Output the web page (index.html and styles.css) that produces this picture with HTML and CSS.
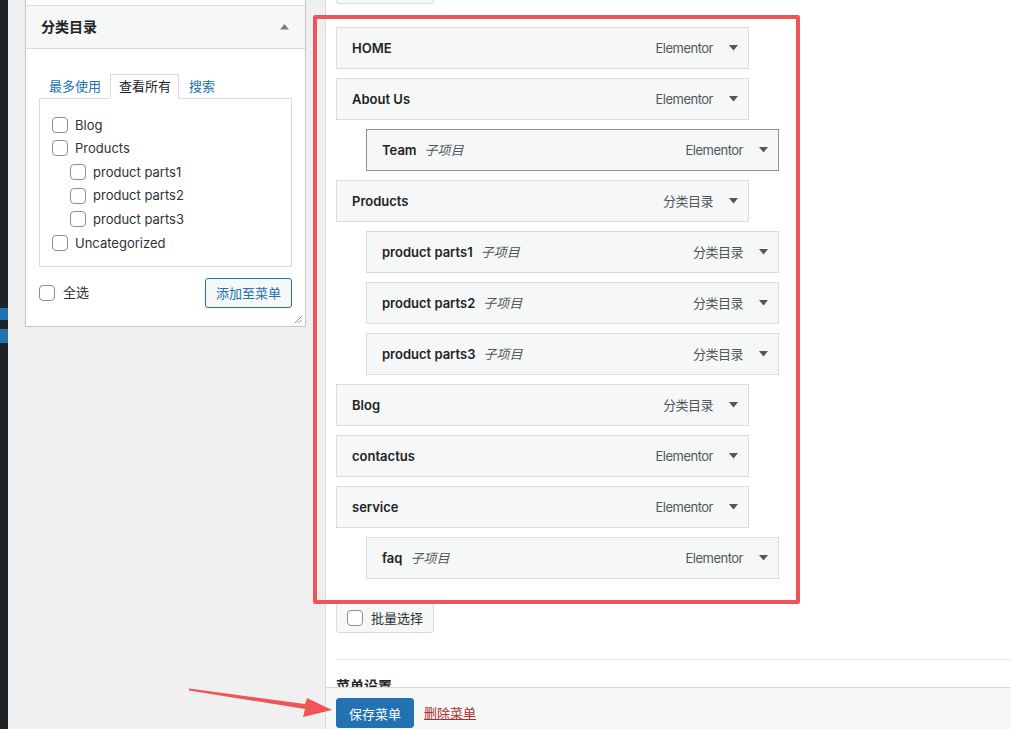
FILE: index.html
```html
<!DOCTYPE html>
<html lang="zh-CN">
<head>
    <meta charset="UTF-8">
    <meta name="viewport" content="width=device-width, initial-scale=1.0">
    <title>菜单</title>
    <link rel="stylesheet" href="styles.css">
</head>
<body>

    <!-- edge of the admin sidebar -->
    <div id="adminmenu-edge">
        <div class="current-top"></div>
        <div class="current-notch"></div>
        <div class="current-bottom"></div>
    </div>

    <div id="wpbody">

        <!-- Left column: add items -->
        <div id="menu-settings-column">
            <div class="accordion">
                <div class="accordion-section prev-section"></div>
                <div class="accordion-section open">
                    <h3 class="accordion-title">
                        分类目录
                        <svg class="toggle-arrow" width="9" height="6" viewBox="0 0 9 6"><polygon points="4.5,0 9,5.5 0,5.5" fill="#787c82"/></svg>
                    </h3>
                    <div class="accordion-content">
                        <ul class="tabs">
                            <li><a href="#">最多使用</a></li>
                            <li class="active">查看所有</li>
                            <li><a href="#">搜索</a></li>
                        </ul>
                        <div class="tabs-panel">
                            <ul class="checklist">
                                <li><label><input type="checkbox"> Blog</label></li>
                                <li><label><input type="checkbox"> Products</label></li>
                                <li class="child"><label><input type="checkbox"> product parts1</label></li>
                                <li class="child"><label><input type="checkbox"> product parts2</label></li>
                                <li class="child"><label><input type="checkbox"> product parts3</label></li>
                                <li><label><input type="checkbox"> Uncategorized</label></li>
                            </ul>
                        </div>
                        <div class="button-controls">
                            <label class="select-all"><input type="checkbox"> 全选</label>
                            <button class="button">添加至菜单</button>
                        </div>
                        <svg class="resize-grip" width="8" height="8" viewBox="0 0 8 8">
                            <line x1="1" y1="8" x2="8" y2="1" stroke="#8c8f94" stroke-width="1"/>
                            <line x1="4.5" y1="8" x2="8" y2="4.5" stroke="#8c8f94" stroke-width="1"/>
                        </svg>
                    </div>
                </div>
            </div>
        </div>

        <!-- Right column: menu structure -->
        <div id="menu-management">
            <div class="menu-edit">
                <div class="menu-inner">
                    <!-- top bulk-select button, scrolled mostly out of view -->
                    <div class="bulk-select top"></div>

                    <ul id="menu-to-edit">
                        <li class="menu-item"><div class="item-bar"><span class="item-title">HOME</span><span class="item-type">Elementor</span><svg class="item-arrow" width="9" height="6" viewBox="0 0 9 6"><polygon points="0,0 9,0 4.5,5.5"/></svg></div></li>
                        <li class="menu-item"><div class="item-bar"><span class="item-title">About Us</span><span class="item-type">Elementor</span><svg class="item-arrow" width="9" height="6" viewBox="0 0 9 6"><polygon points="0,0 9,0 4.5,5.5"/></svg></div></li>
                        <li class="menu-item depth-1"><div class="item-bar focused"><span class="item-title">Team</span><span class="item-sub">子项目</span><span class="item-type">Elementor</span><svg class="item-arrow" width="9" height="6" viewBox="0 0 9 6"><polygon points="0,0 9,0 4.5,5.5"/></svg></div></li>
                        <li class="menu-item"><div class="item-bar"><span class="item-title">Products</span><span class="item-type">分类目录</span><svg class="item-arrow" width="9" height="6" viewBox="0 0 9 6"><polygon points="0,0 9,0 4.5,5.5"/></svg></div></li>
                        <li class="menu-item depth-1"><div class="item-bar"><span class="item-title">product parts1</span><span class="item-sub">子项目</span><span class="item-type">分类目录</span><svg class="item-arrow" width="9" height="6" viewBox="0 0 9 6"><polygon points="0,0 9,0 4.5,5.5"/></svg></div></li>
                        <li class="menu-item depth-1"><div class="item-bar"><span class="item-title">product parts2</span><span class="item-sub">子项目</span><span class="item-type">分类目录</span><svg class="item-arrow" width="9" height="6" viewBox="0 0 9 6"><polygon points="0,0 9,0 4.5,5.5"/></svg></div></li>
                        <li class="menu-item depth-1"><div class="item-bar"><span class="item-title">product parts3</span><span class="item-sub">子项目</span><span class="item-type">分类目录</span><svg class="item-arrow" width="9" height="6" viewBox="0 0 9 6"><polygon points="0,0 9,0 4.5,5.5"/></svg></div></li>
                        <li class="menu-item"><div class="item-bar"><span class="item-title">Blog</span><span class="item-type">分类目录</span><svg class="item-arrow" width="9" height="6" viewBox="0 0 9 6"><polygon points="0,0 9,0 4.5,5.5"/></svg></div></li>
                        <li class="menu-item"><div class="item-bar"><span class="item-title">contactus</span><span class="item-type">Elementor</span><svg class="item-arrow" width="9" height="6" viewBox="0 0 9 6"><polygon points="0,0 9,0 4.5,5.5"/></svg></div></li>
                        <li class="menu-item"><div class="item-bar"><span class="item-title">service</span><span class="item-type">Elementor</span><svg class="item-arrow" width="9" height="6" viewBox="0 0 9 6"><polygon points="0,0 9,0 4.5,5.5"/></svg></div></li>
                        <li class="menu-item depth-1"><div class="item-bar"><span class="item-title">faq</span><span class="item-sub">子项目</span><span class="item-type">Elementor</span><svg class="item-arrow" width="9" height="6" viewBox="0 0 9 6"><polygon points="0,0 9,0 4.5,5.5"/></svg></div></li>
                    </ul>

                    <label class="bulk-select"><input type="checkbox"> 批量选择</label>

                    <hr class="divider">
                    <h3 class="settings-title">菜单设置</h3>
                </div>
            </div>

            <div class="menu-footer">
                <button class="button-primary">保存菜单</button>
                <a class="delete-link" href="#">删除菜单</a>
            </div>
        </div>
    </div>

    <!-- annotation drawn over the screenshot -->
    <div class="callout-box"></div>
    <svg class="callout-arrow" width="155" height="40" viewBox="0 0 155 40">
        <polygon points="4,3.5 120,19 122,13 147,25 118,32 120,24 4,5.5" fill="#f05555"/>
    </svg>

</body>
</html>
```

FILE: styles.css
```css
/* Basic styles */
* {
    box-sizing: border-box;
}

html, body {
    height: 100%;
}

body {
    margin: 0;
    display: flex;
    overflow: hidden;
    background: #f0f0f1;
    color: #2c3338;
    font-family: Inter, "Noto Sans CJK SC", sans-serif;
    font-size: 13px;
    line-height: 1.4;
}

ul {
    margin: 0;
    padding: 0;
    list-style: none;
}

input[type="checkbox"] {
    appearance: none;
    -webkit-appearance: none;
    width: 16px;
    height: 16px;
    margin: 0;
    border: 1px solid #8c8f94;
    border-radius: 4px;
    background: #fff;
    flex-shrink: 0;
}

/* Admin sidebar edge */
#adminmenu-edge {
    width: 8px;
    flex-shrink: 0;
    background: #1d2327;
    padding-top: 308px;
}

.current-top { height: 12px; background: #2271b1; }
.current-notch { height: 9px; }
.current-bottom { height: 14px; background: #2271b1; }

#wpbody {
    flex: 1;
    display: flex;
    min-width: 0;
}

/* Left column */
#menu-settings-column {
    width: 281px;
    flex-shrink: 0;
    margin-left: 17px;
    margin-top: -26px;
}

.accordion {
    background: #fff;
    border: 1px solid #c3c4c7;
}

.prev-section {
    height: 30px;
}

.accordion-section.open {
    border-top: 1px solid #dcdcde;
}

.accordion-title {
    margin: 0;
    height: 43px;
    display: flex;
    align-items: center;
    justify-content: space-between;
    padding: 0 16px 0 15px;
    background: #f6f7f7;
    border-bottom: 1px solid #dcdcde;
    font-size: 14px;
    font-weight: 600;
    color: #1d2327;
}

.accordion-content {
    position: relative;
    padding: 25px 13px 18px;
}

.tabs {
    display: flex;
    margin-bottom: -1px;
}

.tabs li {
    height: 25px;
    line-height: 23px;
    padding: 1px 9px 0 10px;
}

.tabs li a {
    color: #2271b1;
    text-decoration: none;
}

.tabs li.active {
    padding: 0 7px 0 8px;
    border: 1px solid #dcdcde;
    border-bottom-color: #fff;
    background: #fff;
    color: #1d2327;
    position: relative;
    z-index: 1;
}

.tabs-panel {
    border: 1px solid #dcdcde;
    padding: 14px 12px 11px;
}

.checklist li {
    height: 23.6px;
    display: flex;
    align-items: center;
}

.checklist li.child {
    padding-left: 18px;
}

.checklist label {
    display: flex;
    align-items: center;
    gap: 7px;
}

.button-controls {
    margin-top: 11px;
    display: flex;
    align-items: center;
    justify-content: space-between;
}

.select-all {
    display: flex;
    align-items: center;
    gap: 8px;
}

.button {
    height: 30px;
    padding: 0 10px;
    border: 1px solid #2271b1;
    border-radius: 3px;
    background: #f6f7f7;
    color: #2271b1;
    font-family: inherit;
    font-size: 13px;
}

.resize-grip {
    position: absolute;
    right: 3px;
    bottom: 3px;
}

/* Right column */
#menu-management {
    flex: 1;
    min-width: 0;
    margin-left: 19px;
    border-left: 1px solid #dcdcde;
    background: #fff;
    display: flex;
    flex-direction: column;
}

.menu-edit {
    flex: 1;
    min-height: 0;
    overflow: hidden;
    padding-left: 10px;
}

.menu-inner {
    margin-top: -26px;
}

.bulk-select {
    display: inline-flex;
    align-items: center;
    gap: 8px;
    height: 30px;
    padding: 0 10px;
    border: 1px solid #dcdcde;
    border-radius: 3px;
    background: #f6f7f7;
    color: #2c3338;
}

.bulk-select.top {
    display: block;
    width: 98px;
}

#menu-to-edit {
    margin-top: 23px;
    margin-bottom: 24px;
}

.menu-item {
    margin-bottom: 9px;
}

.menu-item:last-child {
    margin-bottom: 0;
}

.menu-item.depth-1 {
    margin-left: 30px;
}

.item-bar {
    width: 413px;
    height: 42px;
    display: flex;
    align-items: center;
    padding-left: 15px;
    border: 1px solid #dcdcde;
    background: #f6f7f7;
}

.item-bar.focused {
    border-color: #8c8f94;
}

.item-title {
    font-weight: 600;
    color: #1d2327;
}

.item-sub {
    margin-left: 8px;
    font-style: italic;
    color: #50575e;
}

.item-type {
    margin-left: auto;
    color: #50575e;
    letter-spacing: -0.5px;
}

.item-arrow {
    margin: 0 10px 0 16px;
    fill: #50575e;
}

.divider {
    margin: 26px 0 0;
    border: 0;
    border-top: 1px solid #ebebeb;
}

.settings-title {
    margin: 16px 0 0;
    font-size: 14px;
    font-weight: 600;
    color: #1d2327;
}

.menu-footer {
    height: 42px;
    flex-shrink: 0;
    display: flex;
    align-items: flex-start;
    gap: 10px;
    padding: 10px 0 0 10px;
    border-top: 1px solid #dcdcde;
    background: #f6f7f7;
}

.button-primary {
    height: 30px;
    padding: 0 12px;
    border: 1px solid #2271b1;
    border-radius: 3px;
    background: #2271b1;
    color: #fff;
    font-family: inherit;
    font-size: 13px;
}

.delete-link {
    line-height: 30px;
    color: #b32d2e;
    text-decoration: underline;
}

/* Annotation */
.callout-box {
    position: absolute;
    left: 313px;
    top: 15px;
    width: 487px;
    height: 589px;
    border: 4px solid #f05555;
    border-radius: 2px;
    pointer-events: none;
}

.callout-arrow {
    position: absolute;
    left: 185px;
    top: 685px;
    pointer-events: none;
}
```
